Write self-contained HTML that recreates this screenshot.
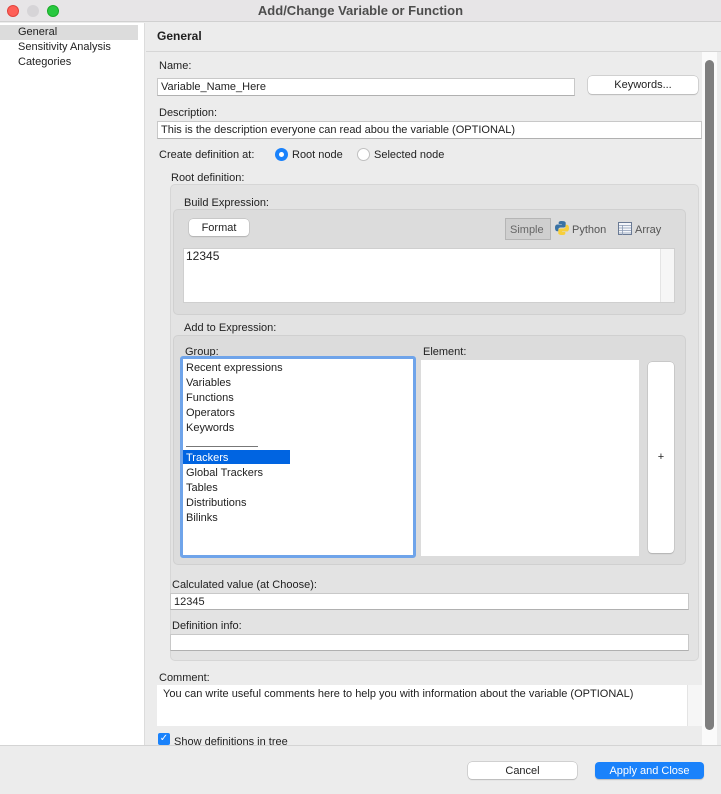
<!DOCTYPE html>
<html><head><style>
*{box-sizing:border-box;margin:0;padding:0}
body{width:721px;height:794px;overflow:hidden;background:#ececec;font-family:"Liberation Sans",sans-serif;font-size:11px;color:#222;position:relative}
.a{position:absolute}
.in{position:absolute;background:#fff;border:1px solid #c8c8c8;border-bottom-color:#b0b0b0;padding:2px 3px;font-size:11px;white-space:nowrap;overflow:hidden}
.btn{position:absolute;background:#fff;border-radius:4px;box-shadow:0 0 0 .5px #b5b5b5,0 1px 1px rgba(0,0,0,.2);text-align:center;font-size:11px;line-height:18px}
.t{position:absolute;white-space:nowrap;font-size:11px}
</style></head><body>
<div class="a" style="left:0;top:0;width:721px;height:22px;background:#e7e5e7;border-bottom:1px solid #d0d0d0"></div>
<div class="a" style="left:7px;top:5px;width:12px;height:12px;border-radius:50%;background:#fe5f57;border:.5px solid #e0443e"></div>
<div class="a" style="left:27px;top:5px;width:12px;height:12px;border-radius:50%;background:#d6d4d7"></div>
<div class="a" style="left:47px;top:5px;width:12px;height:12px;border-radius:50%;background:#28c840;border:.5px solid #1aab29"></div>
<div class="t" style="left:0;width:721px;text-align:center;top:3px;font-size:13px;font-weight:bold;color:#4d4d4d">Add/Change Variable or Function</div>

<div class="a" style="left:0;top:23px;width:145px;height:723px;background:#fff;border-right:1px solid #dcdcdc"></div>
<div class="a" style="left:0;top:25px;width:138px;height:15px;background:#dcdcdc"></div>
<div class="t" style="left:18px;top:26px">General</div>
<div class="t" style="left:18px;top:41px">Sensitivity Analysis</div>
<div class="t" style="left:18px;top:56px">Categories</div>

<div class="t" style="left:157px;top:29px;font-size:12px;font-weight:bold">General</div>
<div class="a" style="left:146px;top:51px;width:575px;height:1px;background:#d6d6d6"></div>

<div class="t" style="left:159px;top:60px">Name:</div>
<div class="in" style="left:157px;top:78px;width:418px;height:18px">Variable_Name_Here</div>
<div class="btn" style="left:588px;top:76px;width:110px;height:18px">Keywords...</div>
<div class="t" style="left:159px;top:107px">Description:</div>
<div class="in" style="left:157px;top:121px;width:545px;height:18px">This is the description everyone can read abou the variable (OPTIONAL)</div>
<div class="t" style="left:159px;top:149px">Create definition at:</div>
<div class="a" style="left:275px;top:148px;width:13px;height:13px;border-radius:50%;background:#1a82fb"></div>
<div class="a" style="left:279px;top:152px;width:5px;height:5px;border-radius:50%;background:#fff"></div>
<div class="t" style="left:292px;top:149px">Root node</div>
<div class="a" style="left:357px;top:148px;width:13px;height:13px;border-radius:50%;background:#fff;border:1px solid #c0c0c0"></div>
<div class="t" style="left:374px;top:149px">Selected node</div>
<div class="t" style="left:171px;top:172px">Root definition:</div>

<div class="a" style="left:170px;top:184px;width:529px;height:477px;background:#e3e3e3;border:1px solid #d6d6d6;border-radius:5px"></div>
<div class="t" style="left:184px;top:197px">Build Expression:</div>
<div class="a" style="left:173px;top:209px;width:513px;height:106px;background:#dcdcdc;border:1px solid #d0d0d0;border-radius:5px"></div>
<div class="btn" style="left:189px;top:219px;width:60px;height:17px">Format</div>
<div class="a" style="left:505px;top:218px;width:46px;height:22px;background:#cfcfcf;border:1px solid #b5b5b5"></div>
<div class="t" style="left:510px;top:224px;color:#666">Simple</div>
<svg class="a" style="left:554px;top:220px" width="16" height="16" viewBox="0 0 16 16"><path d="M7.8 1C4.5 1 4.7 2.4 4.7 2.4V4h3.2v.5H3.4S1 4.2 1 7.8s2.1 3.5 2.1 3.5h1.3V9.6s-.1-2.1 2.1-2.1h3.2s2 0 2-2V2.9S12 1 7.8 1z" fill="#3a72a4"/><path d="M8.2 15c3.3 0 3.1-1.4 3.1-1.4V12H8.1v-.5h4.5S15 11.8 15 8.2s-2.1-3.5-2.1-3.5h-1.3v1.7s.1 2.1-2.1 2.1H6.3s-2 0-2 2v2.6S4 15 8.2 15z" fill="#f7cf3c"/></svg>
<div class="t" style="left:572px;top:224px;color:#555">Python</div>
<svg class="a" style="left:618px;top:222px" width="14" height="13" viewBox="0 0 14 13"><rect x=".5" y=".5" width="13" height="12" fill="#f4f6fa" stroke="#6a7a94"/><path d="M1 3.5h12M1 6h12M1 8.5h12M1 11h12M4.5 3v10" stroke="#8a9ab4" stroke-width=".8"/></svg>
<div class="t" style="left:635px;top:224px;color:#555">Array</div>
<div class="a" style="left:183px;top:248px;width:492px;height:55px;background:#fff;border:1px solid #cfcfcf"></div>
<div class="a" style="left:660px;top:249px;width:14px;height:53px;background:#f6f6f6;border-left:1px solid #e4e4e4"></div>
<div class="t" style="left:186px;top:249px;font-size:12px">12345</div>

<div class="t" style="left:184px;top:322px">Add to Expression:</div>
<div class="a" style="left:173px;top:335px;width:513px;height:230px;background:#dcdcdc;border:1px solid #d0d0d0;border-radius:5px"></div>
<div class="t" style="left:185px;top:346px">Group:</div>
<div class="a" style="left:180px;top:356px;width:236px;height:202px;background:#fff;border:3px solid #6fa4ea;border-radius:3px"></div>
<div class="a" style="left:183px;top:450px;width:107px;height:14px;background:#0064e1"></div>
<div class="t" style="left:186px;top:361px;line-height:15px">Recent expressions<br>Variables<br>Functions<br>Operators<br>Keywords</div>
<div class="a" style="left:186px;top:446px;width:72px;height:1px;background:#777"></div>
<div class="t" style="left:186px;top:451px;line-height:15px"><span style="color:#fff">Trackers</span><br>Global Trackers<br>Tables<br>Distributions<br>Bilinks</div>
<div class="t" style="left:423px;top:346px">Element:</div>
<div class="a" style="left:421px;top:360px;width:218px;height:196px;background:#fff"></div>
<div class="btn" style="left:648px;top:362px;width:26px;height:191px;line-height:191px">+</div>

<div class="t" style="left:172px;top:579px">Calculated value (at Choose):</div>
<div class="in" style="left:170px;top:593px;width:519px;height:17px;padding-top:2px">12345</div>
<div class="t" style="left:172px;top:620px">Definition info:</div>
<div class="in" style="left:170px;top:634px;width:519px;height:17px"></div>

<div class="t" style="left:159px;top:672px">Comment:</div>
<div class="a" style="left:157px;top:685px;width:546px;height:41px;background:#fff"></div>
<div class="a" style="left:687px;top:685px;width:16px;height:41px;background:#f6f6f6;border-left:1px solid #e4e4e4"></div>
<div class="t" style="left:163px;top:688px">You can write useful comments here to help you with information about the variable (OPTIONAL)</div>
<div class="a" style="left:146px;top:733px;width:556px;height:12px;overflow:hidden">
<div class="a" style="left:12px;top:0;width:12px;height:12px;background:#1a82fb;border-radius:2px;color:#fff;font-size:10px;line-height:12px;text-align:center">✓</div>
<div class="t" style="left:28px;top:3px">Show definitions in tree</div></div>

<div class="a" style="left:702px;top:52px;width:15px;height:693px;background:#fafafa"></div>
<div class="a" style="left:705px;top:60px;width:9px;height:670px;background:#7e7e7e;border-radius:5px"></div>

<div class="a" style="left:0;top:745px;width:721px;height:1px;background:#d4d4d4"></div>
<div class="btn" style="left:468px;top:762px;width:109px;height:17px">Cancel</div>
<div class="btn" style="left:595px;top:762px;width:109px;height:17px;background:#1a82fb;color:#fff;box-shadow:0 1px 1px rgba(0,0,0,.2)">Apply and Close</div>
</body></html>
